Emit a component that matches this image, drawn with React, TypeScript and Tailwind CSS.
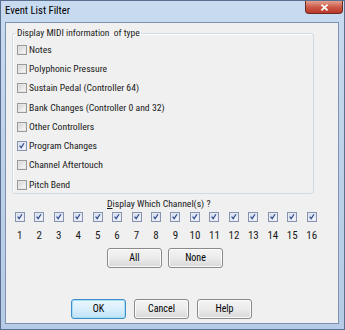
import React from "react";

const rows: { label: string; checked?: boolean }[] = [
  { label: "Notes" },
  { label: "Polyphonic Pressure" },
  { label: "Sustain Pedal (Controller 64)" },
  { label: "Bank Changes (Controller 0 and 32)" },
  { label: "Other Controllers" },
  { label: "Program Changes", checked: true },
  { label: "Channel Aftertouch" },
  { label: "Pitch Bend" },
];

function Box({ checked }: { checked?: boolean }) {
  return (
    <span
      className={
        checked
          ? "relative flex w-[10px] h-[10px] shrink-0 border border-[#8794b0] bg-[#e4e9f4]"
          : "relative flex w-[10px] h-[10px] shrink-0 border border-[#9a9a9a] bg-[#e6e6e6]"
      }
    >
      <span
        className={
          checked
            ? "absolute inset-[1px] bg-gradient-to-br from-[#d3dbec] to-[#f6f8fc]"
            : "absolute inset-[1px] bg-gradient-to-br from-[#d6d6d6] to-[#f9f9f9]"
        }
      />
      {checked && (
        <svg viewBox="0 0 10 10" className="absolute left-0 top-0 w-[8px] h-[8px]">
          <path d="M2 4.5 L4 7 L7.5 1.5" fill="none" stroke="#2f4c8f" strokeWidth="1.5" />
        </svg>
      )}
    </span>
  );
}

function Btn({ children, def }: { children: React.ReactNode; def?: boolean }) {
  return (
    <div
      className={
        def
          ? "flex items-center justify-center h-[20px] w-[55px] rounded-[3px] border border-[#3c8fc9] bg-gradient-to-b from-[#eaf6fd] via-[#d9effc] to-[#bde4f8] text-[10px] leading-[12px] text-black shadow-[inset_0_0_0_1px_#a8dcf5]"
          : "flex items-center justify-center h-[20px] w-[55px] rounded-[3px] border border-[#8a8a8a] bg-gradient-to-b from-[#f4f4f4] via-[#ebebeb] to-[#d8d8d8] text-[10px] leading-[12px] text-black shadow-[inset_0_0_0_1px_#fbfbfb]"
      }
    >
      {children}
    </div>
  );
}

export default function App() {
  const channels = Array.from({ length: 16 }, (_, i) => i + 1);
  return (
    <div className="w-[345px] h-[330px] flex flex-col bg-gradient-to-b from-[#c9dbf0] via-[#bdd1ea] to-[#b6cbe6] border border-[#5a6f8f] font-['Roboto_Condensed','Liberation_Sans',Arial,sans-serif] text-[#1a1a1a]">
      {/* title bar */}
      <div className="flex h-[21px] shrink-0 items-start">
        <div className="pl-[4px] pt-[3px] text-[10.7px] leading-[14px] text-black">Event List Filter</div>
        <div className="ml-auto mr-[1px] flex h-[13px] w-[38px] items-center justify-center rounded-b-[4px] border border-t-0 border-[#6e2a22] bg-gradient-to-b from-[#e3a08f] via-[#cc5a48] to-[#b9382a]">
          <svg viewBox="0 0 10 8" className="w-[9px] h-[7px]">
            <path d="M1.5 0.8 L8.5 7.2 M8.5 0.8 L1.5 7.2" stroke="#fff" strokeWidth="2" />
          </svg>
        </div>
      </div>
      {/* client */}
      <div className="ml-[4px] mr-[5px] mb-[5px] flex-1 flex flex-col border border-[#7f93b0] bg-[#f0f0f0]">
        <fieldset className="ml-[6px] mt-[4px] w-[302px] h-[167px] rounded-[3px] border border-[#d2dbe1] shadow-[inset_1px_1px_0_#fff]">
          <legend className="ml-[3px] px-[1px] text-[9.5px] leading-[12px] whitespace-pre">Display MIDI information  of type</legend>
          <div className="flex flex-col pt-[1px]">
            {rows.map((r) => (
              <div key={r.label} className="flex h-[19.3px] items-center pl-[4px]">
                <Box checked={r.checked} />
                <span className="ml-[2px] text-[9.7px] leading-[12px]">{r.label}</span>
              </div>
            ))}
          </div>
        </fieldset>
        <div className="ml-[101px] mt-[4px] text-[9.7px] leading-[12px]">
          <span className="underline">D</span>isplay Which Channel(s) ?
        </div>
        <div className="ml-[4px] mt-[2px] grid w-[311.5px] grid-cols-16">
          {channels.map((c) => (
            <div key={c} className="flex flex-col items-center">
              <Box checked />
              <span className="mt-[8px] text-[11px] leading-[12px]">{c}</span>
            </div>
          ))}
        </div>
        <div className="ml-[101px] mt-[6px] flex gap-[6px]">
          <Btn>All</Btn>
          <Btn>None</Btn>
        </div>
        <div className="ml-[65px] mt-[31px] flex gap-[8px]">
          <Btn def>OK</Btn>
          <Btn>Cancel</Btn>
          <Btn>Help</Btn>
        </div>
      </div>
    </div>
  );
}
